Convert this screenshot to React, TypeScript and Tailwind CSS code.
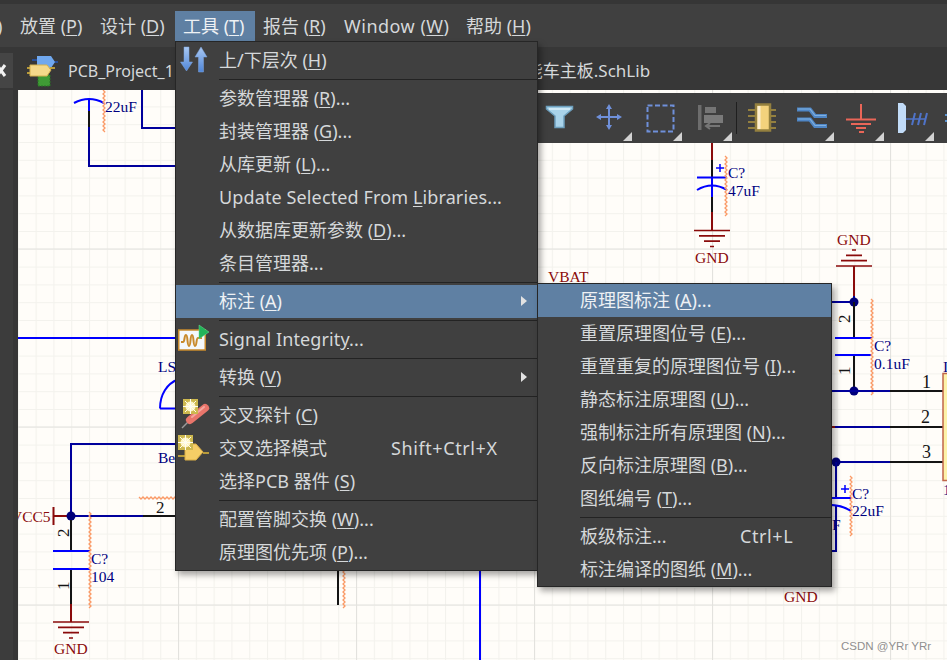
import React from "react";

// ─── Fonts ────────────────────────────────────────────────────────────────────
const UI_FONT = "font-['Noto_Sans','Noto_Sans_CJK_SC',sans-serif]";

// ─── Menu data ────────────────────────────────────────────────────────────────
type Item =
  | { sep: true }
  | {
      sep?: false;
      pre: string;
      ul?: string;
      post?: string;
      shortcut?: string;
      arrow?: boolean;
      active?: boolean;
      latin?: boolean;
      icon?: React.ReactNode;
    };

function ArrowsIcon() {
  return (
    <svg width="32" height="30" viewBox="0 0 32 30">
      <defs>
        <linearGradient id="arr" x1="0" y1="0" x2="0" y2="1">
          <stop offset="0" stopColor="#a9c8f2" />
          <stop offset="1" stopColor="#4f86d8" />
        </linearGradient>
      </defs>
      <path d="M6 2h5v15h3.5l-6 9-6-9H6z" fill="url(#arr)" stroke="#7fa5dc" strokeWidth="0.5" />
      <path d="M23 2l6 10h-3.500v15h-5V12H17z" fill="url(#arr)" stroke="#7fa5dc" strokeWidth="0.5" />
    </svg>
  );
}

function SignalIcon() {
  return (
    <svg width="32" height="30" viewBox="0 0 32 30">
      <rect x="0.750" y="6" width="26.500" height="20" fill="#f4f8fc" stroke="#c88a2c" strokeWidth="1.500" />
      <path
        d="M3 18h2c2 0 1-7 3-7s1 11 3 11 1-11 3-11 1 11 3 11 1-8 3-8h4"
        fill="none"
        stroke="#c88a2c"
        strokeWidth="2"
      />
      <path d="M21 1l10 7-10 7z" fill="#22b45a" stroke="#6ee08e" strokeWidth="0.500" />
    </svg>
  );
}

function Spark({ x, y }: { x: number; y: number }) {
  return (
    <g transform={`translate(${x} ${y})`}>
      <rect width="15" height="15" fill="#cdb84f" />
      <circle cx="7.500" cy="7.500" r="5" fill="#fff6c8" />
      <path d="M7.500 0v15M0 7.500h15M2 2l11 11M13 2L2 13" stroke="#fffdf0" strokeWidth="1" />
    </g>
  );
}

function ProbeIcon() {
  return (
    <svg width="32" height="32" viewBox="0 0 32 32">
      <path d="M4 29l7-7" stroke="#9a9a9a" strokeWidth="1.500" />
      <path d="M12 21L27 9" stroke="#e9756b" strokeWidth="8" strokeLinecap="round" />
      <path d="M14 18L26 8" stroke="#f4a79f" strokeWidth="2" strokeLinecap="round" />
      <Spark x={5} y={0} />
    </svg>
  );
}

function GateIcon() {
  return (
    <svg width="34" height="28" viewBox="0 0 34 28">
      <path d="M0 22h8M25 19h6" stroke="#b79a3a" strokeWidth="2" />
      <path d="M7 10h11l7 8-7 8H7z" fill="#f5cd66" stroke="#d9ad45" strokeWidth="1" />
      <Spark x={0} y={1} />
    </svg>
  );
}

const TOOLS_MENU: Item[] = [
  { pre: "上/下层次 (", ul: "H", post: ")", icon: <ArrowsIcon /> },
  { sep: true },
  { pre: "参数管理器 (", ul: "R", post: ")..." },
  { pre: "封装管理器 (", ul: "G", post: ")..." },
  { pre: "从库更新 (", ul: "L", post: ")..." },
  { pre: "Update Selected From ", ul: "L", post: "ibraries...", latin: true },
  { pre: "从数据库更新参数 (", ul: "D", post: ")..." },
  { pre: "条目管理器..." },
  { sep: true },
  { pre: "标注 (", ul: "A", post: ")", arrow: true, active: true },
  { sep: true },
  { pre: "Signal Integrit", ul: "y", post: "...", icon: <SignalIcon />, latin: true },
  { sep: true },
  { pre: "转换 (", ul: "V", post: ")", arrow: true },
  { sep: true },
  { pre: "交叉探针 (", ul: "C", post: ")", icon: <ProbeIcon /> },
  { pre: "交叉选择模式", shortcut: "Shift+Ctrl+X", icon: <GateIcon /> },
  { pre: "选择PCB 器件 (", ul: "S", post: ")" },
  { sep: true },
  { pre: "配置管脚交换 (", ul: "W", post: ")..." },
  { pre: "原理图优先项 (", ul: "P", post: ")..." },
];

const ANNOTATE_MENU: Item[] = [
  { pre: "原理图标注 (", ul: "A", post: ")...", active: true },
  { pre: "重置原理图位号 (", ul: "E", post: ")..." },
  { pre: "重置重复的原理图位号 (", ul: "I", post: ")..." },
  { pre: "静态标注原理图 (", ul: "U", post: ")..." },
  { pre: "强制标注所有原理图 (", ul: "N", post: ")..." },
  { pre: "反向标注原理图 (", ul: "B", post: ")..." },
  { pre: "图纸编号 (", ul: "T", post: ")..." },
  { sep: true },
  { pre: "板级标注...", shortcut: "Ctrl+L" },
  { pre: "标注编译的图纸 (", ul: "M", post: ")..." },
];

const MENUBAR = [
  { pre: "放置 (", ul: "P", w: "w-[80px]" },
  { pre: "设计 (", ul: "D", w: "w-[83px]" },
  { pre: "工具 (", ul: "T", w: "w-[80px]", active: true },
  { pre: "报告 (", ul: "R", w: "w-[81px]" },
  { pre: "Window (", ul: "W", w: "w-[122px]", latin: true },
  { pre: "帮助 (", ul: "H", w: "w-[83px]" },
];

function MenuPanel({
  items,
  className,
  indent,
  shortcutX,
}: {
  items: Item[];
  className: string;
  indent: string;
  shortcutX: string;
}) {
  return (
    <div className={`absolute z-20 bg-[#404040] border border-[#262626] shadow-[3px_4px_6px_rgba(0,0,0,0.35)] ${className}`}>
      {items.map((item, i) =>
        item.sep ? (
          <div key={i} className={`h-[5px] flex items-center ${indent}`}>
            <div className="h-px w-full bg-[#232323]" />
          </div>
        ) : (
          <div
            key={i}
            className={`relative h-[33px] flex items-center text-[18px] text-[#d5d8da] whitespace-nowrap ${indent} ${
              item.active ? "bg-[#5f80a3] text-[#eef1f4]" : ""
            } ${item.latin ? "tracking-[0.12px]" : ""}`}
          >
            {item.icon && <span className="absolute left-[2px] top-0 h-full flex items-center">{item.icon}</span>}
            <span>
              {item.pre}
              {item.ul && <span className="underline underline-offset-2">{item.ul}</span>}
              {item.post}
            </span>
            {item.shortcut && (
              <span className={`absolute top-[3px] tracking-[0.6px] ${shortcutX}`}>{item.shortcut}</span>
            )}
            {item.arrow && (
              <span className="absolute right-[10px] w-0 h-0 border-y-[5px] border-y-transparent border-l-[6px] border-l-[#e2e2e2]" />
            )}
          </div>
        )
      )}
    </div>
  );
}

// ─── Toolbar ──────────────────────────────────────────────────────────────────
function ToolBtn({ children, corner = true, w = "w-[50px]" }: { children: React.ReactNode; corner?: boolean; w?: string }) {
  return (
    <div className={`relative h-full shrink-0 ${w}`}>
      <svg width="50" height="50" viewBox="0 0 50 50" className="block">
        {children}
      </svg>
      {corner && (
        <svg width="9" height="9" viewBox="0 0 9 9" className="absolute bottom-[2px] right-[2px]">
          <path d="M9 0v9H0z" fill="#d2d2d2" />
        </svg>
      )}
    </div>
  );
}

function Toolbar() {
  return (
    <div className="absolute z-10 top-[3px] left-[502px] right-0 h-[50px] bg-[#3f3f3f] flex pl-[14px]">
      <ToolBtn corner={false}>
        <path d="M12.500 13.500h26v2.500l-8.500 7v11.500h-9V23l-8.500-7z" fill="#a9d3ea" stroke="#6d9fbd" strokeWidth="1.500" />
        <path d="M15 16h21" stroke="#dcf0fa" strokeWidth="1.500" />
      </ToolBtn>
      <ToolBtn>
        <path d="M25 13v22M14 24h22" stroke="#6f90da" strokeWidth="2" />
        <path d="M25 11l-3 5h6zM25 37l-3-5h6zM12 24l5-3v6zM38 24l-5-3v6z" fill="#6f90da" />
      </ToolBtn>
      <ToolBtn>
        <rect x="13.500" y="12.500" width="26" height="26" fill="none" stroke="#6f90da" strokeWidth="2" strokeDasharray="5 2.500" />
      </ToolBtn>
      <ToolBtn>
        <rect x="14" y="12" width="3.500" height="25" fill="#6d6d6d" />
        <rect x="21" y="14" width="11" height="6" fill="#757575" />
        <rect x="20" y="22" width="19" height="8" fill="#7a7a7a" />
        <path d="M23 33h13M26 30l-4 3 4 3" fill="none" stroke="#757575" strokeWidth="2" />
      </ToolBtn>
      <div className="w-[1px] h-[32px] mt-[9px] ml-[2px] mr-[1px] bg-[#1f1f1f] shrink-0" />
      <ToolBtn corner={false} w="w-[48px]">
        <path d="M10 17h8M10 23h8M10 29h8M10 35h8M30 17h8M30 23h8M30 29h8M30 35h8" stroke="#94803f" strokeWidth="2" />
        <rect x="18" y="11.500" width="14" height="26" fill="#f3d27c" stroke="#94803f" strokeWidth="2.500" />
        <rect x="19.500" y="13" width="3" height="23" fill="#fbeed0" />
      </ToolBtn>
      <ToolBtn>
        <path d="M11 16.500h13l5 6.500h12M11 26.500h13l5 6.500h12" fill="none" stroke="#4f86c5" strokeWidth="4" />
        <path d="M12 16h12l5 6.500h11M12 26h12l5 6.500h11" fill="none" stroke="#7fb0e0" strokeWidth="1.200" />
      </ToolBtn>
      <ToolBtn>
        <path d="M25 11v15" stroke="#ea6658" strokeWidth="2" />
        <path d="M10 26.500h30" stroke="#ea6658" strokeWidth="2" />
        <path d="M15 31h20" stroke="#ea6658" strokeWidth="2" />
        <path d="M20 35h10M23 39h5" stroke="#ea6658" strokeWidth="2" />
      </ToolBtn>
      <ToolBtn>
        <path d="M12 10h5l3 3v24l-3 3h-5z" fill="#c2dcf8" />
        <path d="M20 26h19" stroke="#4f73c8" strokeWidth="1.500" />
        <path d="M26 32l3-12M32 32l3-12M38 32l3-12" stroke="#4f73c8" strokeWidth="2" />
      </ToolBtn>
      <div className="w-[11px] flex flex-col justify-center items-end gap-[4px] shrink-0">
        <div className="w-[2px] h-[2px] bg-[#5b93cf]" />
        <div className="w-[2px] h-[2px] bg-[#5b93cf]" />
      </div>
    </div>
  );
}

// ─── Schematic ────────────────────────────────────────────────────────────────
const NAVY = "#00009c";
const BLUE = "#0000ff";
const RED = "#8a0b0b";
const BLACK = "#141414";

function Wire({ d, c = NAVY, w = 2 }: { d: string; c?: string; w?: number }) {
  return <path d={d} fill="none" stroke={c} strokeWidth={w} />;
}

function Zig({ x, y, len, horizontal }: { x: number; y: number; len: number; horizontal?: boolean }) {
  const pts: string[] = [];
  for (let i = 0; i <= len; i += 2) {
    const off = i % 4 === 0 ? -1 : 1;
    pts.push(horizontal ? `${x + i},${y + off}` : `${x + off},${y + i}`);
  }
  return <polyline points={pts.join(" ")} fill="none" stroke="#fb9a66" strokeWidth="1.300" />;
}

function T({
  x,
  y,
  children,
  c = "#000080",
  rot,
  size = 15.5,
}: {
  x: number;
  y: number;
  children: React.ReactNode;
  c?: string;
  rot?: boolean;
  size?: number;
}) {
  return (
    <text
      x={x}
      y={y}
      fill={c}
      fontSize={size}
      transform={rot ? `rotate(-90 ${x} ${y})` : undefined}
      fontFamily="'Liberation Serif', serif"
    >
      {children}
    </text>
  );
}

function Gnd({ x, y, up }: { x: number; y: number; up?: boolean }) {
  const s = up ? -1 : 1;
  return (
    <Wire
      d={`M${x - 18} ${y}h36M${x - 13} ${y + s * 5.3}h26M${x - 8} ${y + s * 10.6}h16M${x - 2} ${y + s * 16}h4`}
      c={RED}
      w={1.7}
    />
  );
}

function Schematic() {
  return (
    <svg className="block w-full h-full" viewBox="18 90 929 570">
      <defs>
        <pattern id="minor" x="0" y="17.400" width="17.800" height="17.800" patternUnits="userSpaceOnUse">
          <path d="M0.500 0v17.800M0 0.500h17.800" stroke="#f3f2ed" strokeWidth="1.200" fill="none" />
        </pattern>
        <pattern id="major" x="0" y="70.500" width="178" height="178" patternUnits="userSpaceOnUse">
          <path d="M0.500 0v178M0 0.500h178" stroke="#e3e2de" strokeWidth="1.200" fill="none" />
        </pattern>
      </defs>
      <rect x="18" y="90" width="929" height="570" fill="#fffdf9" />
      <rect x="18" y="90" width="929" height="570" fill="url(#minor)" />
      <rect x="18" y="90" width="929" height="570" fill="url(#major)" />

      {/* top left cap */}
      <Wire d="M89 100v27" c={BLACK} />
      <Wire d="M89 100v11" c={BLUE} />
      <path d="M74 103q15-8 30 0" fill="none" stroke={BLUE} strokeWidth="2" />
      <Wire d="M89 127v39H178" />
      <Wire d="M142 90v38H178" />
      <Zig x={104} y={90} len={42} />
      <T x={105} y={112}>22uF</T>

      {/* left wires */}
      <Wire d="M18 338H178" c={BLUE} />
      <T x={158} y={372}>LS</T>
      <path d="M160 408.500c0-14 7-25 18-29M160 408.500h18" fill="none" stroke={BLUE} strokeWidth="2" />
      <Wire d="M178 444H71v72" />
      <T x={158} y={463}>Be</T>

      {/* VCC5 + C? 104 */}
      <T x={11} y={522} c={RED}>VCC5</T>
      <Wire d="M53.500 507v18M54 516H71" c={RED} />
      <Wire d="M71 516H143" />
      <Wire d="M143 516H178" c={BLACK} />
      <circle cx="71" cy="516" r="4.500" fill="#00007a" />
      <Zig x={139} y={498} len={40} horizontal />
      <T x={156} y={513} c={BLACK} size={17}>2</T>
      <Wire d="M71 520v31M71 569v35" c={BLACK} />
      <Wire d="M71 604v18" c={RED} />
      <Wire d="M53 551h37M53 569h37" c={BLUE} />
      <Zig x={90} y={512} len={96} />
      <T x={69} y={537} c={BLACK} rot size={17}>2</T>
      <T x={69} y={590} c={BLACK} rot size={17}>1</T>
      <T x={91} y={564}>C?</T>
      <T x={91} y={582}>104</T>
      <Gnd x={71} y={622} />
      <T x={54} y={654} c={RED}>GND</T>

      {/* bottom stubs */}
      <Wire d="M338 560v45" c={BLACK} />
      <Zig x={344} y={560} len={48} />
      <Wire d="M480 560v100" c={BLUE} />

      {/* 47uF cap */}
      <Wire d="M712 143v17" c={RED} />
      <Wire d="M712 160v70" c={BLACK} />
      <Wire d="M712 212v18" c={RED} />
      <Wire d="M712 177v20" c={BLUE} />
      <Wire d="M697 177.500h30" c={BLUE} />
      <path d="M697 190q15-9 30 0" fill="none" stroke={BLUE} strokeWidth="2" />
      <path d="M716 168h8M720 164v8" stroke={BLUE} strokeWidth="1.500" />
      <Zig x={726} y={156} len={60} />
      <T x={728} y={178}>C?</T>
      <T x={728} y={196}>47uF</T>
      <Gnd x={712} y={230.500} />
      <T x={695} y={263} c={RED}>GND</T>

      <T x={548} y={282} c={RED}>VBAT</T>

      {/* upper right GND + 0.1uF */}
      <T x={837} y={245} c={RED}>GND</T>
      <Gnd x={854} y={266} up />
      <Wire d="M854 266v30" c={RED} />
      <Wire d="M854 296v6" />
      <Wire d="M820 302h34" />
      <circle cx="854" cy="302" r="4.500" fill="#00007a" />
      <Wire d="M854 302v36M854 355v36" c={BLACK} />
      <Wire d="M835 338h37M835 355h37" c={BLUE} />
      <Zig x={872} y={299} len={96} />
      <T x={850} y={323} c={BLACK} rot size={17}>2</T>
      <T x={850} y={375} c={BLACK} rot size={17}>1</T>
      <T x={874} y={351}>C?</T>
      <T x={874} y={369}>0.1uF</T>
      <circle cx="854" cy="391" r="4.500" fill="#00007a" />
      <Wire d="M820 391h70" />
      <Wire d="M890 391h54" c={BLACK} />
      <Wire d="M820 427h15" c={RED} />
      <Wire d="M835 427h55" />
      <Wire d="M890 427h54" c={BLACK} />
      <Wire d="M820 462h70" />
      <Wire d="M890 462h54" c={BLACK} />
      <circle cx="836" cy="462" r="4.500" fill="#00007a" />
      <T x={922} y={388} c={BLACK} size={18}>1</T>
      <T x={921} y={423} c={BLACK} size={18}>2</T>
      <T x={922} y={458} c={BLACK} size={18}>3</T>
      <rect x="943" y="373.500" width="6" height="107" fill="#fdf2a8" stroke="#c0664a" strokeWidth="1.500" />
      <T x={943} y={372}>I</T>
      <T x={943} y={495}>1</T>

      {/* 22uF cap */}
      <Wire d="M836 462v36M836 505v46H825" />
      <Wire d="M825 498h26" c={BLUE} />
      <path d="M825 505q15-1 26 6" fill="none" stroke={BLUE} strokeWidth="2" />
      <path d="M841 489h8M845 485v8" stroke={BLUE} strokeWidth="1.500" />
      <Zig x={851} y={476} len={60} />
      <T x={852} y={499}>C?</T>
      <T x={852} y={516}>22uF</T>
      <T x={832} y={530}>F</T>
      <T x={784} y={602} c={RED}>GND</T>

      <text x="841" y="650" fill="#8f8f8f" fontSize="11.500" fontFamily="'Liberation Sans', sans-serif">
        CSDN @YRr YRr
      </text>
    </svg>
  );
}

function TabIcon() {
  return (
    <svg width="32" height="32" viewBox="0 0 32 32">
      <rect x="12" y="20" width="12" height="11" fill="#3f9a35" stroke="#2b7426" strokeDasharray="2 1" />
      <path d="M6 5h6M26 7h6" stroke="#2457b5" strokeWidth="1.500" />
      <path d="M11 1h14l4 6-4 6H11z" fill="#70a8ee" />
      <path d="M1 13h4M1 18h4M24 13h5" stroke="#b79a3a" strokeWidth="2" />
      <path d="M4 10h17l4 5-4 6H4z" fill="#f4d98a" stroke="#d3b14e" />
    </svg>
  );
}

export default function App() {
  return (
    <div className={`relative w-[947px] h-[660px] overflow-hidden flex flex-col bg-[#3d3d3d] ${UI_FONT}`}>
      {/* menu bar */}
      <div className="h-[47px] shrink-0 border-t-[4px] border-[#363636] bg-[#404040] flex items-start pl-[12px] pt-[7px] text-[18px] text-[#d5d8da] relative">
        <span className="absolute -left-[3px] top-[9px]">)</span>
        {MENUBAR.map((m) => (
          <div
            key={m.pre}
            className={`h-[31px] ${m.w} pl-[8px] leading-[31px] whitespace-nowrap shrink-0 ${
              m.active ? "bg-[#5f80a3] text-[#eef1f4]" : ""
            } ${m.latin ? "tracking-[0.5px]" : ""}`}
          >
            {m.pre}
            <span className="underline underline-offset-2">{m.ul}</span>)
          </div>
        ))}
      </div>

      {/* document tabs */}
      <div className="h-[43px] shrink-0 bg-[#373737] flex items-center relative pt-[4px]">
        <div className="w-[13px] h-[35px] -mt-[1px] bg-[#454545] shrink-0 flex items-center">
          <svg width="13" height="35" viewBox="0 0 13 35">
            <path d="M-3 12l8 11M-3 23l8-11" stroke="#f2f2f2" strokeWidth="3" />
          </svg>
        </div>
        <span className="ml-[13px] shrink-0">
          <TabIcon />
        </span>
        <span className="ml-[10px] text-[16px] text-[#d5d8da] whitespace-nowrap shrink-0">PCB_Project_1</span>
        <span className="ml-[335px] text-[17px] text-[#d5d8da] whitespace-nowrap shrink-0">智能车主板.SchLib</span>
      </div>

      {/* body */}
      <div className="flex-1 flex min-h-0">
        <div className="w-[18px] shrink-0 bg-[#3c3c3c] border-r-[5px] border-[#363636]" />
        <div className="relative flex-1 min-w-0">
          <Schematic />
          <Toolbar />
        </div>
      </div>

      <MenuPanel items={TOOLS_MENU} className="top-[41px] left-[175px] w-[363px] py-[1.5px]" indent="pl-[43px]" shortcutX="left-[215px]" />
      <MenuPanel items={ANNOTATE_MENU} className="top-[283px] left-[537px] w-[295px]" indent="pl-[42px]" shortcutX="left-[202px]" />
    </div>
  );
}
